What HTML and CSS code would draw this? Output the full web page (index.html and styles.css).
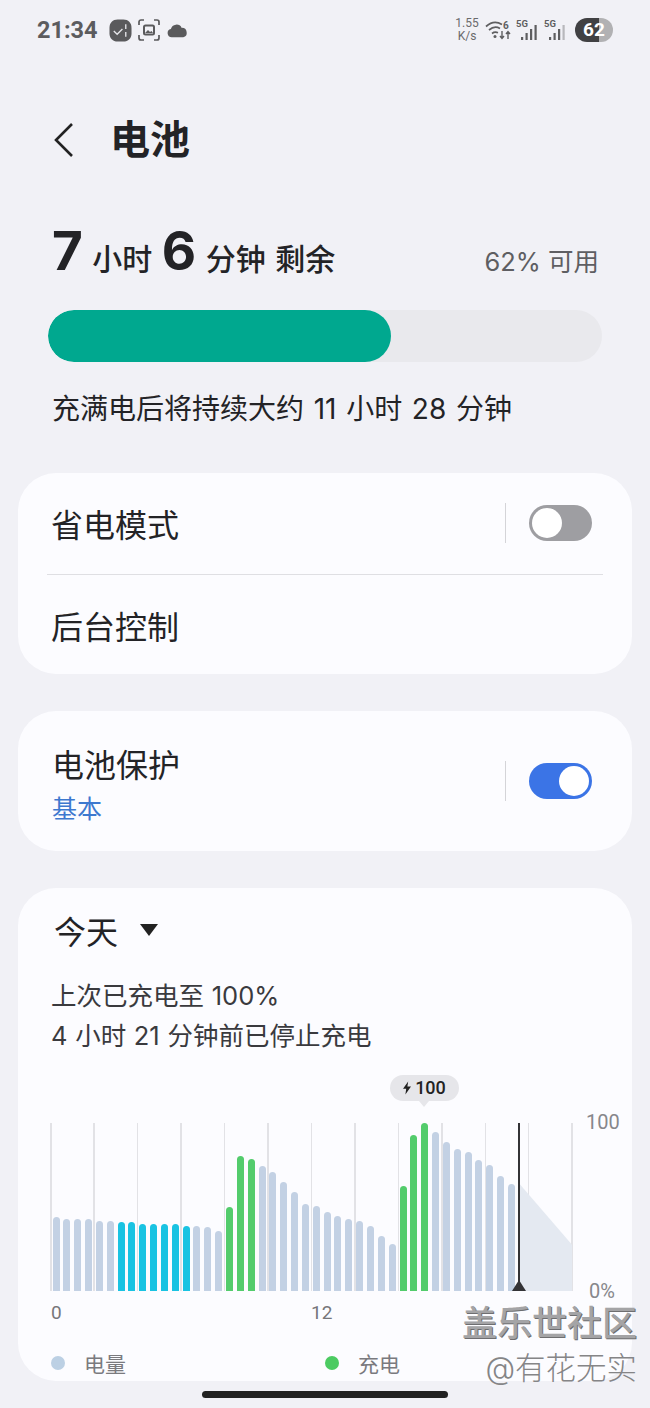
FILE: index.html
```html
<!DOCTYPE html>
<html lang="zh">
<head>
<meta charset="utf-8">
<title>电池</title>
<link rel="stylesheet" href="styles.css">
</head>
<body>
<div class="screen">
  <div class="status">
    <div class="status-left">
      <span class="time">21:34</span>
      <svg class="ic-check" viewBox="0 0 24 24"><path d="M9 .5h6c5 0 8.500 3.500 8.500 8.500v6c0 5-3.500 8.500-8.500 8.500H9C4 23.500.5 20 .5 15V9C.5 4 4 .5 9 .5z" fill="#5a5a5c"/><path d="M5 12.500l3.500 3.500 5.500-5.500" fill="none" stroke="#e6e6ea" stroke-width="1.400"/><path d="M17.500 5.500v5M17.500 13.500v5" stroke="#e6e6ea" stroke-width="1.400"/></svg>
      <svg class="ic-scan" viewBox="0 0 22 22"><path d="M1 6V3a2 2 0 0 1 2-2h3M16 1h3a2 2 0 0 1 2 2v3M21 16v3a2 2 0 0 1-2 2h-3M6 21H3a2 2 0 0 1-2-2v-3" fill="none" stroke="#5a5a5c" stroke-width="1.700"/><rect x="6" y="6.500" width="10" height="9" rx="1.500" fill="none" stroke="#5a5a5c" stroke-width="2"/><path d="M7 14l3-3 2 2 1.500-1 1.500 2z" fill="#5a5a5c"/></svg>
      <svg class="ic-cloud" viewBox="0 0 20 14"><path d="M4.500 13.500a4 4 0 0 1-.8-7.900A5.500 5.500 0 0 1 14 4.500a4.600 4.600 0 0 1 1.500 9z" fill="#5a5a5c"/></svg>
    </div>
    <div class="status-right">
      <span class="speed">1.55<br>K/s</span>
      <svg class="ic-wifi" viewBox="0 0 27 22"><g fill="none" stroke="#5e5e60" stroke-width="1.700"><path d="M1 7.500c5-4.500 11-5 16-2"/><path d="M4 11c3.500-3 8-3.300 11-1.500"/><path d="M7 14.500c2-1.500 4-1.600 6-.8"/></g><circle cx="10" cy="17.500" r="1.500" fill="#5e5e60"/><text x="18" y="9.500" class="wifi-six">6</text><path d="M17 12v7M15 17l2 2.500 2-2.500M23 20v-7M21 15l2-2.500 2 2.500" fill="none" stroke="#5e5e60" stroke-width="1.400"/></svg>
      <svg class="ic-signal" viewBox="0 0 24 24"><text x="0" y="9" class="five-g">5G</text><g fill="#5e5e60"><rect x="5" y="19" width="2.200" height="3"/><rect x="9.500" y="15" width="2.200" height="7"/><rect x="14" y="11" width="2.200" height="11"/><rect x="18.500" y="7" width="2.200" height="15"/></g></svg>
      <svg class="ic-signal" viewBox="0 0 24 24"><text x="0" y="9" class="five-g">5G</text><g fill="#5e5e60"><rect x="5" y="19" width="2.200" height="3"/><rect x="9.500" y="15" width="2.200" height="7"/><rect x="14" y="11" width="2.200" height="11"/></g><rect x="18.500" y="7" width="2.200" height="15" fill="#b8b8bc"/></svg>
      <span class="battery">62</span>
    </div>
  </div>

  <header class="title-row">
    <svg class="back" viewBox="0 0 22 36"><path d="M19 2L3 18l16 16" fill="none" stroke="#222" stroke-width="2.600"/></svg>
    <h1 class="title">电池</h1>
  </header>

  <section class="summary">
    <div class="remain"><b class="big">7</b> 小时 <b class="big">6</b> 分钟 剩余</div>
    <div class="avail">62% 可用</div>
  </section>

  <div class="track"><div class="fill"></div></div>
  <p class="full-note">充满电后将持续大约 11 小时 28 分钟</p>

  <section class="card card-modes">
    <div class="row row-top">
      <span class="row-label">省电模式</span>
      <span class="sep"></span>
      <span class="toggle"></span>
    </div>
    <div class="divider"></div>
    <div class="row row-bottom">
      <span class="row-label">后台控制</span>
    </div>
  </section>

  <section class="card card-protect">
    <div class="protect-text">
      <div class="row-label">电池保护</div>
      <div class="sub">基本</div>
    </div>
    <span class="sep"></span>
    <span class="toggle on"></span>
  </section>

  <section class="card card-chart">
    <div class="period"><span>今天</span><span class="caret"></span></div>
    <p class="charge-note">上次已充电至 100%<br>4 小时 21 分钟前已停止充电</p>

    <div class="chart">
      <div class="bubble"><svg class="bolt" viewBox="0 0 10 16"><path d="M6.500 0L0 9h4l-1 7 7-10H5.500z" fill="#222"/></svg>100</div>
      <div class="grid-lines"><i></i><i></i><i></i><i></i><i></i><i></i><i></i><i></i><i></i><i></i><i></i><i></i><i></i></div>
      <svg class="forecast" viewBox="0 0 53 167" preserveAspectRatio="none"><path d="M0 60L53 121V167H0z" fill="#e4e9f1"/></svg>
      <div class="bars">
        <i class="b" style="height:74px"></i><i class="b" style="height:72px"></i><i class="b" style="height:72px"></i><i class="b" style="height:72px"></i><i class="b" style="height:70px"></i><i class="b" style="height:70px"></i>
        <i class="b c" style="height:69px"></i><i class="b c" style="height:69px"></i><i class="b c" style="height:67px"></i><i class="b c" style="height:67px"></i><i class="b c" style="height:67px"></i><i class="b c" style="height:67px"></i><i class="b c" style="height:65px"></i>
        <i class="b" style="height:65px"></i><i class="b" style="height:64px"></i><i class="b" style="height:60px"></i>
        <i class="b g" style="height:84px"></i><i class="b g" style="height:135px"></i><i class="b g" style="height:132px"></i>
        <i class="b" style="height:125px"></i><i class="b" style="height:119px"></i><i class="b" style="height:109px"></i><i class="b" style="height:99px"></i><i class="b" style="height:87px"></i><i class="b" style="height:85px"></i><i class="b" style="height:79px"></i><i class="b" style="height:75px"></i><i class="b" style="height:72px"></i><i class="b" style="height:70px"></i><i class="b" style="height:65px"></i><i class="b" style="height:55px"></i><i class="b" style="height:47px"></i>
        <i class="b g" style="height:105px"></i><i class="b g" style="height:156px"></i><i class="b g" style="height:168px"></i>
        <i class="b" style="height:159px"></i><i class="b" style="height:149px"></i><i class="b" style="height:142px"></i><i class="b" style="height:139px"></i><i class="b" style="height:131px"></i><i class="b" style="height:126px"></i><i class="b" style="height:115px"></i><i class="b" style="height:107px"></i>
      </div>
      <div class="cursor"></div>
      <span class="y y-top">100</span>
      <span class="y y-bottom">0%</span>
    </div>
    <div class="x-axis"><span class="x0">0</span><span class="x12">12</span></div>
    <div class="legend">
      <span class="key"><i class="dot"></i>电量</span>
      <span class="key key-green"><i class="dot green"></i>充电</span>
    </div>
  </section>

  <div class="home"></div>
  <div class="watermark"><div class="wm-main">盖乐世社区</div><div class="wm-sub">@有花无实</div></div>
</div>
</body>
</html>
```
FILE: styles.css
```css
* { box-sizing: border-box; }
html, body { margin: 0; padding: 0; }
body { background: #f1f1f6; color: #232326; font-family: Inter, "Noto Sans CJK SC", sans-serif; }
.screen { position: relative; width: 650px; height: 1408px; overflow: hidden; }

.status { height: 60px; padding: 17px 37px 0 37px; display: flex; justify-content: space-between; align-items: flex-start; }
.status-left { display: flex; align-items: center; height: 26px; }
.time { font-family: Roboto, sans-serif; font-weight: 700; font-size: 23.500px; line-height: 26px; color: #5c5c5e; width: 72px; }
.ic-check { width: 23px; height: 23px; margin-right: 6px; }
.ic-scan { width: 22px; height: 22px; margin-right: 7px; }
.ic-cloud { width: 21px; height: 15px; }
.status-right { display: flex; align-items: center; height: 26px; }
.speed { font-family: Roboto, sans-serif; font-size: 12px; line-height: 13px; color: #6a6a6c; text-align: center; width: 26px; margin-right: 5px; }
.ic-wifi { width: 27px; height: 22px; margin-right: 4px; }
.wifi-six { font: 700 10px Roboto, sans-serif; fill: #5e5e60; }
.ic-signal { width: 24px; height: 24px; margin-right: 4px; }
.five-g { font: 700 9.500px Roboto, sans-serif; fill: #5e5e60; }
.battery { width: 38px; height: 24px; border-radius: 12px; margin-left: 3px; background: linear-gradient(90deg, #414143 0 62%, #b1b1b3 62% 100%); color: #fff; font: 700 19px/24px Roboto, sans-serif; text-align: center; }

.title-row { height: 80px; margin-top: 40px; display: flex; align-items: center; padding-left: 53px; }
.back { width: 22px; height: 36px; margin-right: 35px; }
.title { margin: 0; font-size: 40px; font-weight: 700; line-height: 50px; }

.summary { height: 70px; margin-top: 48px; padding: 0 51px 0 52px; display: flex; justify-content: space-between; align-items: flex-end; }
.remain { font-size: 30px; font-weight: 500; line-height: 60px; white-space: nowrap; word-spacing: 1.500px; margin-bottom: 9px; }
.big { font-size: 53px; font-weight: 700; line-height: 60px; }
.avail { font-size: 25.500px; line-height: 40px; color: #5e5e62; margin-bottom: 16px; }

.track { margin: 12px 48px 0; height: 52px; border-radius: 26px; background: #e9e9ed; overflow: hidden; }
.fill { width: 343px; height: 100%; border-radius: 26px; background: #00a88f; }
.full-note { margin: 28px 0 0 52px; font-size: 28px; line-height: 38px; white-space: nowrap; word-spacing: 1.800px; }

.card { background: #fcfcff; border-radius: 38px; margin: 0 18px; width: 614px; }
.card-modes { margin-top: 45px; height: 201px; }
.row { display: flex; align-items: center; padding: 0 40px 0 33px; height: 100px; }
.row-label { font-size: 32px; line-height: 44px; padding-top: 6px; }
.row .row-label { flex: 1; }
.row-top { height: 101px; padding-bottom: 2px; }
.divider { height: 1px; background: #dfdfe3; margin: 0 29px; }
.sep { width: 1px; height: 40px; background: #d4d4d8; margin-right: 23px; flex: none; }
.toggle { display: block; flex: none; width: 63px; height: 36px; border-radius: 18px; background: #9e9ea2; position: relative; }
.toggle::after { content: ""; position: absolute; top: 3px; left: 3px; width: 30px; height: 30px; border-radius: 50%; background: #fff; }
.toggle.on { background: #3b74e6; }
.toggle.on::after { left: 30px; }

.card-protect { margin-top: 37px; height: 140px; display: flex; align-items: center; padding: 0 40px 0 34px; }
.protect-text { flex: 1; padding-top: 1px; }
.sub { font-size: 25px; line-height: 34px; color: #3d78cf; margin-top: 4px; }

.card-chart { margin-top: 37px; height: 493px; padding-top: 22px; position: relative; }
.period { display: flex; align-items: center; padding-left: 36px; font-size: 32px; line-height: 46px; gap: 22px; }
.caret { width: 0; height: 0; border-left: 9px solid transparent; border-right: 9px solid transparent; border-top: 12px solid #222; margin-top: -6px; }
.charge-note { margin: 20px 0 0 33px; font-size: 25.500px; line-height: 40px; color: #3a3a3e; white-space: nowrap; word-spacing: 0.500px; }
.chart { position: relative; margin: 67px 0 0 32px; width: 560px; height: 168px; }
.grid-lines { position: absolute; left: 0; top: 0; bottom: 0; width: 523px; display: flex; justify-content: space-between; }
.grid-lines i { width: 1.500px; background: #e2e2e6; }
.forecast { position: absolute; left: 469px; top: 0; width: 53px; height: 168px; }
.bars { position: absolute; left: 2.500px; right: 0; bottom: 0; height: 168px; display: flex; align-items: flex-end; gap: 3.850px; }
.b { flex: none; width: 7px; background: #c3d1e4; border-radius: 3.500px 3.500px 0 0; }
.b.c { background: #19c3e2; }
.b.g { background: #53cc6c; }
.cursor { position: absolute; left: 468px; top: 0; bottom: 0; width: 2px; background: #333336; }
.cursor::after { content: ""; position: absolute; left: -6px; bottom: 0; width: 0; height: 0; border-left: 7px solid transparent; border-right: 7px solid transparent; border-bottom: 11px solid #333336; }
.bubble { position: absolute; left: 340px; top: -48px; width: 69px; height: 26px; border-radius: 13px; background: #e6e6ea; display: flex; align-items: center; justify-content: center; gap: 4px; font: 500 18px/26px Roboto, sans-serif; color: #222; }
.bubble::after { content: ""; position: absolute; left: 29px; bottom: -6px; border-left: 5px solid transparent; border-right: 5px solid transparent; border-top: 6px solid #e6e6ea; }
.bolt { width: 8px; height: 14px; }
.y { position: absolute; font: 400 20px/24px Roboto, sans-serif; color: #87878b; }
.y-top { left: 536px; top: -13px; }
.y-bottom { left: 539px; bottom: -12px; }
.x-axis { position: relative; height: 24px; margin-top: 10px; font: 400 19px/24px Roboto, sans-serif; color: #76767a; }
.x0 { position: absolute; left: 33px; }
.x12 { position: absolute; left: 293px; }
.legend { display: flex; margin-top: 26px; padding-left: 33px; font-size: 21px; line-height: 28px; color: #7a7a7e; }
.key { display: flex; align-items: center; gap: 19px; width: 274px; }
.dot { width: 14px; height: 14px; border-radius: 50%; background: #bcd0e4; margin-top: -4px; }
.dot.green { background: #4ccb62; }

.home { width: 246px; height: 7px; border-radius: 4px; background: #222; margin: 10px 0 0 202px; }
.watermark { position: absolute; right: 13px; top: 1302px; text-align: right; color: #8a8a8c; white-space: nowrap; }
.wm-main { font-size: 35px; line-height: 42px; font-weight: 500; color: #a4a4a6; text-shadow: 1px 1px 0 #6e6e70; }
.wm-sub { font-size: 30.500px; line-height: 42px; margin-top: 3px; font-weight: 300; color: #858587; }
```
